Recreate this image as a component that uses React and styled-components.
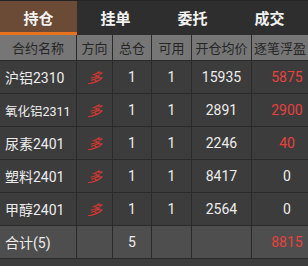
import React from "react";
import styled, { createGlobalStyle } from "styled-components";

const Global = createGlobalStyle`
  html, body {
    margin: 0;
    padding: 0;
    background: #3c3c3c;
  }
  body {
    font-family: Roboto, "Noto Sans CJK SC", sans-serif;
  }
`;

const Page = styled.div`
  width: 308px;
  height: 266px;
  overflow: hidden;
  background: #3c3c3c;
`;

const Tabs = styled.div`
  display: grid;
  grid-template-columns: repeat(4, 77px);
  height: 35px;
  border-top: 1px solid #242424;
  box-sizing: border-box;
  background: #2e2e2e;
`;

const Tab = styled.div`
  display: flex;
  align-items: center;
  justify-content: center;
  font-size: 15px;
  font-weight: 700;
  color: #f2f2f2;
  background: ${(p) => (p.$active ? "#6b4b36" : "#2e2e2e")};
  border-bottom: 3px solid ${(p) => (p.$active ? "#e8731c" : "transparent")};
  box-sizing: border-box;
  padding-top: 2px;
`;

const Grid = styled.div`
  display: grid;
  grid-template-columns: 77px 36px 39px 40px 60px 70px;
  width: 322px;
`;

const Cell = styled.div`
  display: flex;
  align-items: center;
  justify-content: ${(p) => (p.$left ? "flex-start" : "center")};
  padding-left: ${(p) => (p.$left ? (p.$tight ? "2px" : "5px") : "0")};
  height: ${(p) => (p.$head ? "26px" : "33px")};
  box-sizing: border-box;
  border-right: 1px solid #2a2a2a;
  border-bottom: 1px solid #2a2a2a;
  background: ${(p) => (p.$head ? "#767676" : p.$total ? "#4e4e4e" : "#3c3c3c")};
  color: ${(p) => (p.$head ? "#262626" : p.$red ? "#e8423c" : "#ededed")};
  font-size: ${(p) => (p.$head ? "13px" : p.$small ? "12.5px" : "14px")};
  white-space: nowrap;
  overflow: hidden;
  &:nth-child(6n) {
    border-right: none;
  }
`;

const Dir = styled.span`
  color: #e8362f;
  font-style: italic;
  font-size: 14px;
  transform: skewX(-12deg);
`;

const heads = ["合约名称", "方向", "总仓", "可用", "开仓均价"];

const rows = [
  { name: "沪铝2310", total: 1, avail: 1, price: 15935, pnl: 5875 },
  { name: "氧化铝2311", total: 1, avail: 1, price: 2891, pnl: 2900, small: true },
  { name: "尿素2401", total: 1, avail: 1, price: 2246, pnl: 40 },
  { name: "塑料2401", total: 1, avail: 1, price: 8417, pnl: 0 },
  { name: "甲醇2401", total: 1, avail: 1, price: 2564, pnl: 0 },
];

export default function App() {
  return (
    <Page>
      <Global />
      <Tabs>
        <Tab $active>持仓</Tab>
        <Tab>挂单</Tab>
        <Tab>委托</Tab>
        <Tab>成交</Tab>
      </Tabs>
      <Grid>
        {heads.map((h) => (
          <Cell key={h} $head>
            {h}
          </Cell>
        ))}
        <Cell $head $left $tight>逐笔浮盈</Cell>
        {rows.map((r) => (
          <React.Fragment key={r.name}>
            <Cell $left $small={r.small}>
              {r.name}
            </Cell>
            <Cell>
              <Dir>多</Dir>
            </Cell>
            <Cell>{r.total}</Cell>
            <Cell>{r.avail}</Cell>
            <Cell>{r.price}</Cell>
            <Cell $red={r.pnl > 0}>{r.pnl}</Cell>
          </React.Fragment>
        ))}
        <Cell $total $left>合计(5)</Cell>
        <Cell $total />
        <Cell $total>5</Cell>
        <Cell $total />
        <Cell $total />
        <Cell $total $red>8815</Cell>
      </Grid>
    </Page>
  );
}
